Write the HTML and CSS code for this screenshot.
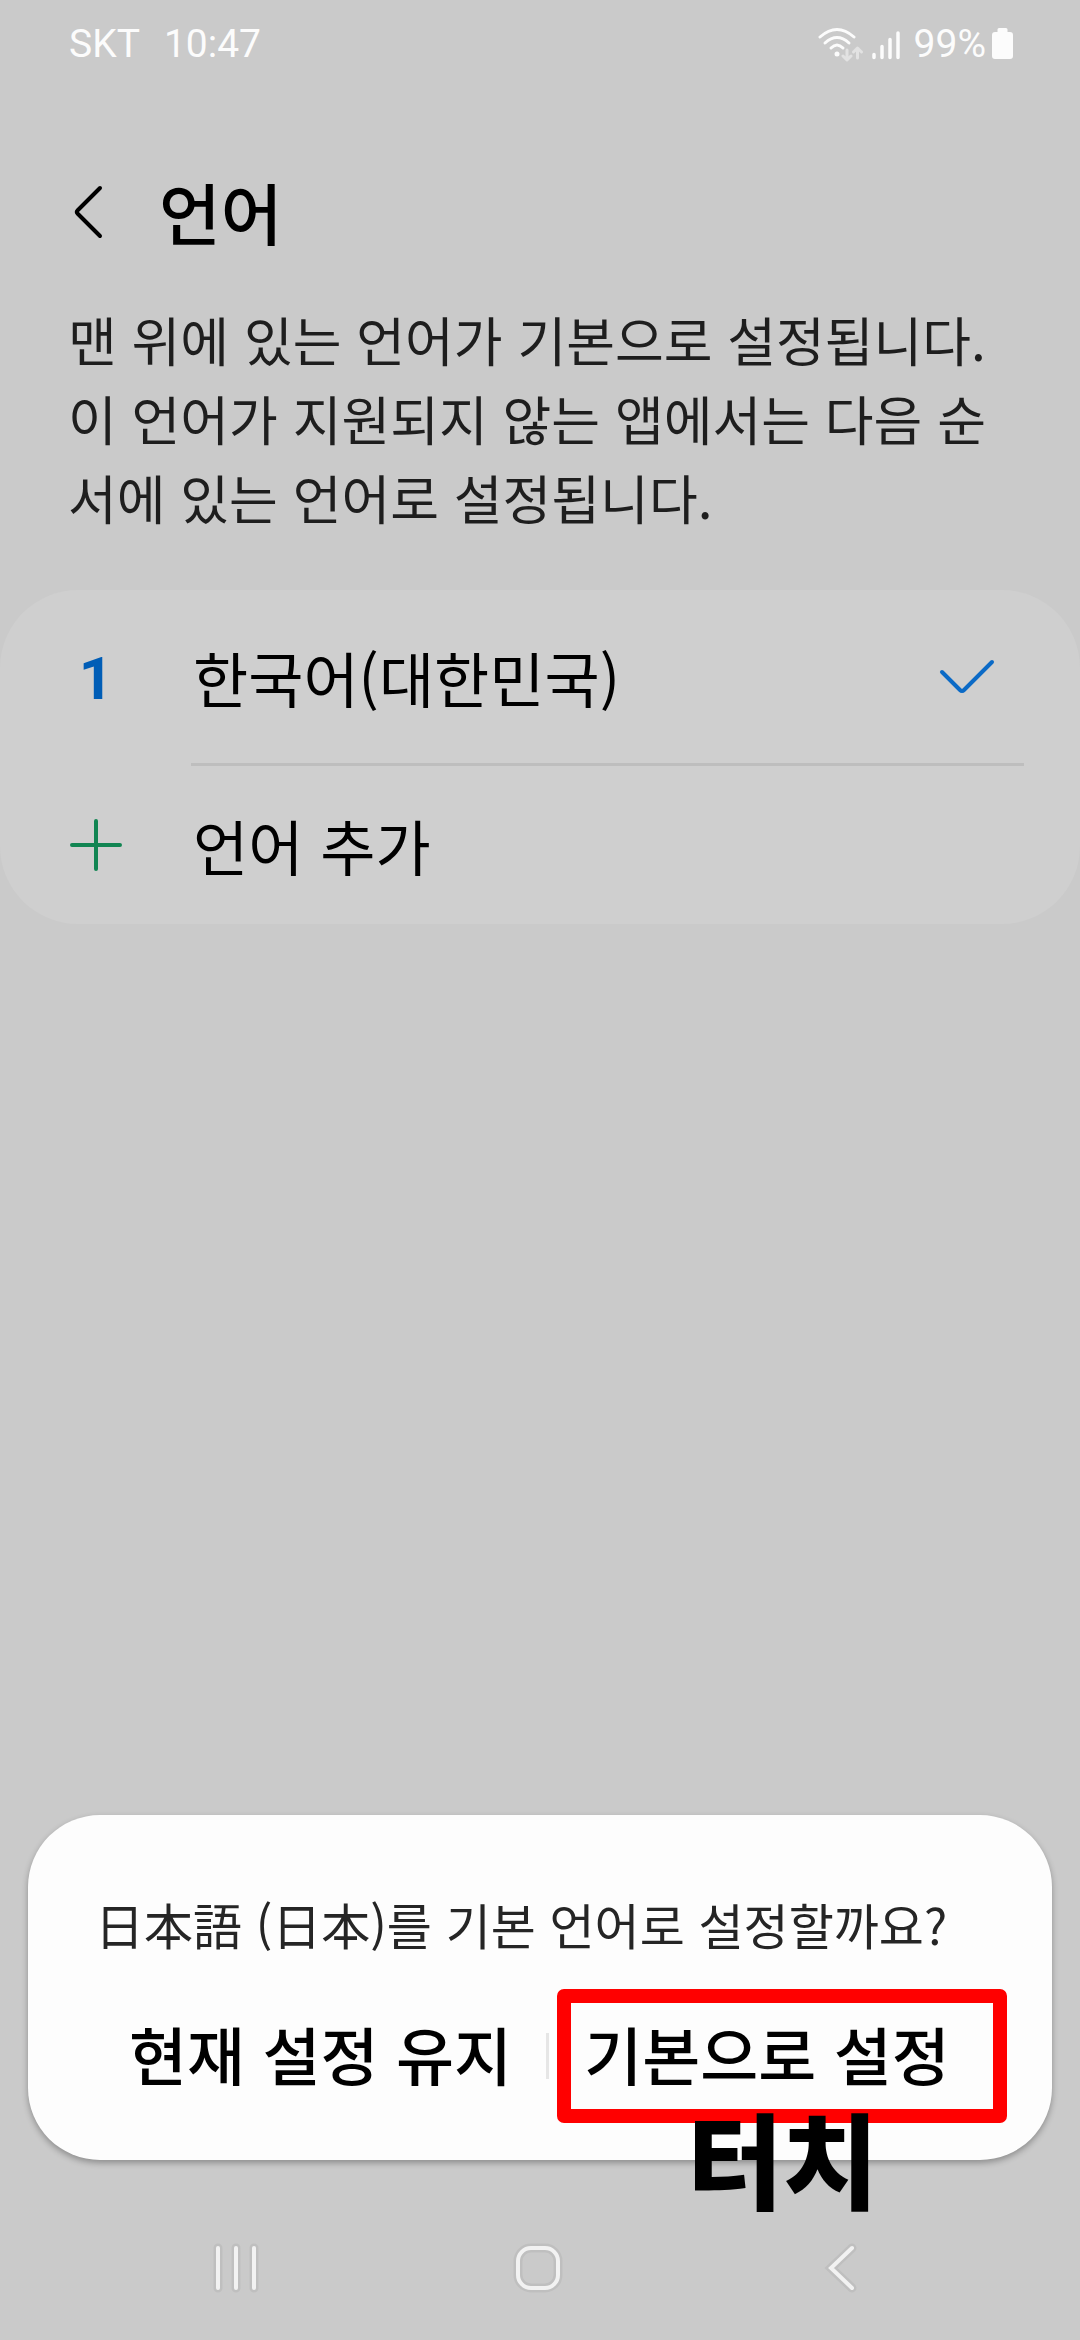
FILE: index.html
```html
<!DOCTYPE html>
<html lang="ko">
<head>
<meta charset="utf-8">
<meta name="viewport" content="width=device-width, initial-scale=1">
<title>언어</title>
<link rel="stylesheet" href="styles.css">
</head>
<body>
<div class="screen">
  <div class="status">
    <div class="status-left"><span>SKT</span><span>10:47</span></div>
    <div class="status-right">
      <svg class="wifi" width="46" height="36" viewBox="0 0 46 36" aria-hidden="true">
        <g fill="none" stroke="#fcfcfc" stroke-width="3" stroke-linecap="round">
          <path d="M2 11Q19 -4 36 11"/>
          <path d="M7 17Q19 6 31 17"/>
          <path d="M13 22Q19 16 25 22"/>
        </g>
        <circle cx="19" cy="28" r="2.5" fill="#fcfcfc"/>
        <g fill="none" stroke="#e2e2e2" stroke-width="3" stroke-linecap="round" stroke-linejoin="round">
          <path d="M29 24v9M25 30l4 4 4-4"/>
          <path d="M39.500 32v-9M35.500 26l4-4 4 4"/>
        </g>
      </svg>
      <svg class="signal" width="28" height="36" viewBox="0 0 28 36" aria-hidden="true">
        <path d="M2 28.500v3M10 20.500v11M18 13.500v18M26 7v24.500" fill="none" stroke="#fcfcfc" stroke-width="3.500" stroke-linecap="round"/>
      </svg>
      <span class="percent">99%</span>
      <svg class="battery" width="21" height="36" viewBox="0 0 21 36" aria-hidden="true">
        <path d="M7 2h7a1.500 1.500 0 0 1 1.500 1.500V6H18a3 3 0 0 1 3 3v21a3 3 0 0 1-3 3H3a3 3 0 0 1-3-3V9a3 3 0 0 1 3-3h2.500V3.500A1.500 1.500 0 0 1 7 2z" fill="#fcfcfc"/>
      </svg>
    </div>
  </div>

  <header class="header">
    <button class="back" type="button" aria-label="뒤로">
      <svg width="32" height="56" viewBox="0 0 32 56"><path d="M28 4L5.500 26.500q-1.500 1.500 0 3L28 52" fill="none" stroke="#000" stroke-width="4" stroke-linecap="round"/></svg>
    </button>
    <h1 class="title">언어</h1>
  </header>

  <p class="intro">맨 위에 있는 언어가 기본으로 설정됩니다. 이 언어가 지원되지 않는 앱에서는 다음 순서에 있는 언어로 설정됩니다.</p>

  <ul class="languages">
    <li class="row">
      <span class="lead number">1</span>
      <span class="label">한국어(대한민국)</span>
      <svg class="check" width="58" height="38" viewBox="0 0 58 38" aria-hidden="true"><path d="M4 14L22 32q2 2 4 0L54 4" fill="none" stroke="#0b6ac6" stroke-width="4" stroke-linecap="round"/></svg>
    </li>
    <li class="divider" role="separator"></li>
    <li>
      <button class="row add" type="button">
        <span class="lead"><svg width="52" height="52" viewBox="0 0 52 52" aria-hidden="true"><path d="M26 2v48M2 26h48" fill="none" stroke="#118552" stroke-width="4" stroke-linecap="round"/></svg></span>
        <span class="label">언어 추가</span>
      </button>
    </li>
  </ul>

  <section class="dialog" role="dialog" aria-labelledby="question">
    <p class="question" id="question">日本語 (日本)를 기본 언어로 설정할까요?</p>
    <div class="actions">
      <button class="action" type="button">현재 설정 유지</button>
      <span class="split"></span>
      <div class="target">
        <button class="action" type="button">기본으로 설정</button>
        <span class="frame"></span>
        <strong class="hint">터치</strong>
      </div>
    </div>
  </section>

  <nav class="nav">
    <button type="button" aria-label="최근 앱">
      <svg width="52" height="56" viewBox="0 0 52 56"><g fill="none" stroke-linecap="round"><path d="M8 8v40M26 8v40M44 8v40" stroke="#bfbfbf" stroke-width="9"/><path d="M8 8v40M26 8v40M44 8v40" stroke="#f2f2f2" stroke-width="4"/></g></svg>
    </button>
    <button type="button" aria-label="홈">
      <svg width="52" height="56" viewBox="0 0 52 56"><g fill="none"><rect x="6" y="8" width="40" height="40" rx="13" stroke="#bfbfbf" stroke-width="9"/><rect x="6" y="8" width="40" height="40" rx="13" stroke="#f2f2f2" stroke-width="4"/></g></svg>
    </button>
    <button type="button" aria-label="뒤로">
      <svg width="52" height="56" viewBox="0 0 52 56"><g fill="none" stroke-linecap="round"><path d="M38 8L17 28 38 48" stroke="#bfbfbf" stroke-width="9"/><path d="M38 8L17 28 38 48" stroke="#f2f2f2" stroke-width="4"/></g></svg>
    </button>
  </nav>
</div>
</body>
</html>
```
FILE: styles.css
```css
* {
  box-sizing: border-box;
}

body {
  margin: 0;
  background: #cacaca;
  color: #000;
  font-family: "Noto Sans CJK KR", sans-serif;
}

button {
  margin: 0;
  padding: 0;
  border: 0;
  background: none;
  color: inherit;
  font: inherit;
  text-align: left;
}

svg {
  display: block;
  flex: none;
}

.screen {
  display: flex;
  flex-direction: column;
  min-height: 100vh;
}

.status {
  display: flex;
  justify-content: space-between;
  align-items: center;
  height: 88px;
  padding: 0 67px 0 69px;
  color: #fcfcfc;
  font: 39px/48px Roboto, sans-serif;
}

.status-left {
  display: flex;
  gap: 24px;
}

.status-right {
  display: flex;
  align-items: center;
}

.signal {
  margin-left: 8px;
}

.percent {
  margin: 0 6px 0 14px;
}

.header {
  display: flex;
  align-items: center;
  gap: 55px;
  height: 160px;
  margin-top: 44px;
  padding: 0 72px;
}

.title {
  margin: 0;
  padding-bottom: 2px;
  font-size: 67px;
  line-height: 96px;
  font-weight: 500;
}

.intro {
  margin: 8px 0 53px;
  padding: 0 68px;
  color: #1e1e1e;
  font-size: 53px;
  line-height: 79px;
}

.languages {
  margin: 0;
  padding: 0;
  list-style: none;
  border-radius: 78px;
  background: #cfcfcf;
}

.row {
  display: flex;
  align-items: center;
  width: 100%;
  height: 173px;
  padding: 0 84px 0 70px;
  font-size: 60px;
  line-height: 88px;
}

.add {
  height: 158px;
}

.lead {
  display: flex;
  justify-content: center;
  width: 52px;
  margin-right: 71px;
}

.number {
  padding-top: 5px;
  color: #005db6;
  font-family: Roboto, sans-serif;
  font-weight: 700;
}

.label {
  flex: 1;
}

.divider {
  height: 3px;
  margin: 0 56px 0 191px;
  background: #bebebe;
}

.dialog {
  margin: auto 28px 0;
  padding: 71px 45px 37px 67px;
  border-radius: 72px;
  background: #fdfdfd;
  box-shadow: 0 3px 6px rgba(0, 0, 0, 0.3);
}

.question {
  margin: 0;
  color: #252525;
  font-size: 49px;
  line-height: 76px;
}

.actions {
  display: flex;
  align-items: center;
  margin-top: 27px;
}

.action {
  flex: 1;
  padding-bottom: 6px;
  font-size: 63px;
  line-height: 96px;
  font-weight: 500;
  text-align: center;
  white-space: nowrap;
}

.split {
  width: 3px;
  height: 46px;
  margin-right: 8px;
  background: #e6e6e6;
}

.target {
  position: relative;
  display: flex;
  width: 450px;
  height: 134px;
  padding-right: 30px;
}

.frame {
  position: absolute;
  inset: 0;
  border: 14px solid #f00;
  border-radius: 7px;
  pointer-events: none;
}

.hint {
  position: absolute;
  top: 98px;
  left: 130px;
  font-size: 104px;
  line-height: 140px;
  font-weight: 900;
  white-space: nowrap;
}

.nav {
  display: flex;
  justify-content: space-between;
  align-items: center;
  height: 180px;
  padding: 36px 214px 0 210px;
}
```
